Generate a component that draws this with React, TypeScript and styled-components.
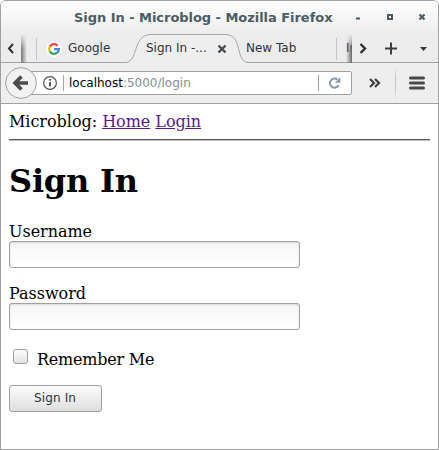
import React from "react";
import styled, { createGlobalStyle } from "styled-components";

const GlobalStyle = createGlobalStyle`
  * { box-sizing: border-box; }
  html, body { margin: 0; background: #fff; }
  body { overflow: hidden; }
`;

const Window = styled.div`
  display: flex;
  flex-direction: column;
  width: 439px;
  height: 450px;
  border: 1px solid #a0a0a0;
  border-radius: 6px 6px 0 0;
  background: #fff;
  overflow: hidden;
  font-family: "DejaVu Sans", sans-serif;
  font-size: 12px;
  color: #2f3438;
`;

const Chrome = styled.header`
  flex: none;
  height: 103px;
  border-bottom: 1px solid #a0a0a0;
  background: linear-gradient(#ffffff 0, #ececec 34px, #ececec 62px, #eeeeee 62px);
`;

const TitleBar = styled.div`
  display: flex;
  align-items: center;
  height: 33px;
  padding-left: 73px;
`;

const Title = styled.h1`
  flex: none;
  width: 281px;
  margin: 0;
  font-size: 13px;
  line-height: 31px;
  font-weight: bold;
  letter-spacing: -0.04px;
  color: #4a5c66;
  white-space: nowrap;
`;

const WindowControls = styled.svg`
  flex: none;
  width: 76px;
  height: 33px;
`;

const TabStrip = styled.div`
  display: flex;
  height: 29px;
  box-shadow: inset 0 -1px #a0a3a6;
`;

const ScrollLeft = styled.svg`
  flex: none;
  width: 35px;
  height: 29px;
`;

const ScrollRight = styled.svg`
  position: relative;
  flex: none;
  width: 93px;
  height: 29px;
  margin-left: -14px;
`;

const Tab = styled.div<{ $width: number; $pad: number; $divider?: "left" | "right" }>`
  position: relative;
  flex: none;
  display: flex;
  align-items: center;
  width: ${(p) => p.$width}px;
  height: 29px;
  padding-left: ${(p) => p.$pad}px;
  line-height: 29px;
  white-space: nowrap;
  ${(p) =>
    p.$divider &&
    `background: linear-gradient(#c4c4c4, #c4c4c4) ${p.$divider} 4px / 1px 22px no-repeat;`}
`;

const TabShape = styled.svg`
  position: absolute;
  left: -14px;
  top: 0;
  width: 128px;
  height: 29px;
`;

const TabLabel = styled.span<{ $width?: number }>`
  position: relative;
  height: 29px;
  ${(p) => p.$width && `width: ${p.$width}px;`}
`;

const TabClose = styled.svg`
  position: relative;
  width: 10px;
  height: 10px;
`;

const Favicon = styled.svg`
  width: 16px;
  height: 16px;
  margin-right: 6px;
`;

const NavBar = styled.nav`
  display: flex;
  align-items: center;
  height: 40px;
  padding-left: 4px;
`;

const BackButton = styled.svg`
  position: relative;
  z-index: 1;
  flex: none;
  width: 32px;
  height: 32px;
`;

const UrlBar = styled.div`
  display: flex;
  align-items: center;
  width: 323px;
  height: 24px;
  margin-left: -8px;
  padding-left: 12px;
  border: 1px solid #a0a0a0;
  border-radius: 2px;
  background: #fff;
`;

const InfoIcon = styled.svg`
  flex: none;
  width: 16px;
  height: 16px;
  margin-right: 5px;
`;

const Separator = styled.i<{ $height: number; $color: string }>`
  flex: none;
  width: 1px;
  height: ${(p) => p.$height}px;
  background: ${(p) => p.$color};
`;

const Address = styled.span`
  flex: none;
  width: 249px;
  margin-left: 5px;
  line-height: 20px;
  color: #858c93;
  b { font-weight: normal; color: #000; }
`;

const ReloadIcon = styled.svg`
  width: 14px;
  height: 14px;
  margin-left: 9px;
`;

const MoreIcon = styled.svg`
  width: 12px;
  height: 12px;
  margin: 0 14px 0 17px;
`;

const MenuIcon = styled.svg`
  width: 18px;
  height: 16px;
  margin-left: 12px;
`;

const Page = styled.main`
  flex: 1;
  padding: 8px 8px 0;
  font-family: "DejaVu Serif", serif;
  font-size: 16px;
  line-height: 19px;
  letter-spacing: -0.03px;
  color: #000;
`;

const SiteNav = styled.div`
  height: 27px;
`;

const SiteLink = styled.a`
  color: #551a8b;
  text-decoration: underline;
`;

const Rule = styled.hr`
  width: 421px;
  height: 2px;
  margin: 0;
  border: 0;
  background: linear-gradient(#5a5a5a 50%, #c0c0c0 50%);
`;

const Heading = styled.h2`
  margin: 21px 0 22px;
  font-size: 32px;
  line-height: 38px;
  font-weight: bold;
  letter-spacing: -0.2px;
`;

const Field = styled.div`
  display: flex;
  flex-direction: column;
  height: 46px;
  margin-bottom: 16px;
`;

const TextInput = styled.input`
  width: 291px;
  height: 27px;
  margin: 0;
  border: 1px solid #a0a0a0;
  border-radius: 3px;
  outline: none;
  background: linear-gradient(#f6f6f6, #ffffff);
  box-shadow: inset 0 1px 2px #d8d8d8;
`;

const Remember = styled.label`
  display: flex;
  align-items: center;
  height: 19px;
  margin-top: 20px;
  letter-spacing: -0.22px;
`;

const Checkbox = styled.input`
  appearance: none;
  width: 15px;
  height: 15px;
  margin: 0 9px 6px 4px;
  border: 1px solid #a0a0a0;
  border-radius: 3px;
  background: linear-gradient(#fdfdfd, #e2e2e2);
`;

const SubmitButton = styled.button`
  display: block;
  width: 93px;
  height: 27px;
  margin: 16px 0 0;
  padding: 0 1px 2px 0;
  border: 1px solid #a0a0a0;
  border-radius: 3px;
  background: linear-gradient(#fcfcfc, #dedede);
  font: 12px "DejaVu Sans", sans-serif;
  letter-spacing: 0.15px;
  color: #2f3438;
`;

export default function App() {
  return (
    <>
      <GlobalStyle />
      <Window>
        <Chrome>
          <TitleBar>
            <Title>Sign In - Microblog - Mozilla Firefox</Title>
            <WindowControls viewBox="355 1 76 33" fill="none" stroke="#4a5c66">
              <path d="M356 18.5h4" strokeWidth="2" />
              <rect x="388" y="15" width="4" height="4" strokeWidth="2" />
              <path d="M419.5 14.5l5 5m0-5l-5 5" strokeWidth="2.2" />
            </WindowControls>
          </TitleBar>
          <TabStrip>
            <ScrollLeft viewBox="1 34 35 29">
              <defs>
                <linearGradient id="shadeL">
                  <stop offset="0" stopColor="#777" />
                  <stop offset="1" stopColor="#777" stopOpacity="0" />
                </linearGradient>
                <linearGradient id="fadeL" x1="0" y1="0" x2="0" y2="1">
                  <stop offset="0" stopColor="#ececec" />
                  <stop offset="1" stopColor="#ececec" stopOpacity="0" />
                </linearGradient>
              </defs>
              <path d="M13 44l-4 4.5 4 4.5" fill="none" stroke="#2c3135" strokeWidth="2" />
              <rect x="21" y="34" width="6" height="29" fill="url(#shadeL)" />
              <rect x="21" y="34" width="6" height="15" fill="url(#fadeL)" />
            </ScrollLeft>
            <Tab $width={103} $pad={10} $divider="left">
              <Favicon viewBox="0 0 16 16">
                <circle cx="8" cy="8" r="8" fill="#fff" />
                <g fill="none" strokeWidth="2.3">
                  <path d="M3.8 5.6A4.9 4.9 0 0 1 11.6 4.7" stroke="#ea4335" />
                  <path d="M3.8 5.6A4.9 4.9 0 0 0 3.8 10.4" stroke="#fbbc05" />
                  <path d="M3.8 10.4A4.9 4.9 0 0 0 11.2 11.7" stroke="#34a853" />
                  <path d="M11.2 11.7A4.9 4.9 0 0 0 12.8 8.2H8" stroke="#4285f4" />
                </g>
              </Favicon>
              <TabLabel>Google</TabLabel>
            </Tab>
            <Tab $width={99} $pad={7}>
              <TabShape viewBox="125 34 128 29">
                <path
                  d="M125 62.5C139 62.5 132 34.5 151 34.5H225C244 34.5 234 62.5 249 62.5V63H125Z"
                  fill="#eeeeee"
                />
                <path
                  d="M125 62.5C139 62.5 132 34.5 151 34.5H225C244 34.5 234 62.5 249 62.5H253"
                  fill="none"
                  stroke="#a0a6aa"
                />
              </TabShape>
              <TabLabel $width={71}>Sign In -...</TabLabel>
              <TabClose viewBox="0 0 10 10">
                <path d="M1.5 1.5l7 7m0-7l-7 7" stroke="#454c50" strokeWidth="2.4" />
              </TabClose>
            </Tab>
            <Tab $width={99} $pad={8} $divider="right">
              <TabLabel>New Tab</TabLabel>
            </Tab>
            <Tab $width={22} $pad={9}>
              <TabLabel>In</TabLabel>
            </Tab>
            <ScrollRight viewBox="345 34 93 29">
              <defs>
                <linearGradient id="shadeR">
                  <stop offset="0" stopColor="#777" stopOpacity="0" />
                  <stop offset="1" stopColor="#666" />
                </linearGradient>
                <linearGradient id="fadeR" x1="0" y1="0" x2="0" y2="1">
                  <stop offset="0" stopColor="#000" />
                  <stop offset="0.55" stopColor="#fff" />
                </linearGradient>
                <mask id="maskR">
                  <rect x="346" y="34" width="6" height="29" fill="url(#fadeR)" />
                </mask>
              </defs>
              <rect x="346" y="34" width="6" height="29" fill="url(#shadeR)" mask="url(#maskR)" />
              <path d="M352 34h86v28h-86z" fill="#ececec" />
              <path d="M360.5 44l4.5 4.5-4.5 4.5" fill="none" stroke="#2c3135" strokeWidth="2.4" />
              <path d="M385 48.5h12M391 42.5v12" stroke="#3c3c3c" strokeWidth="2" />
              <path d="M420 47h7l-3.5 4z" fill="#2c3840" />
            </ScrollRight>
          </TabStrip>
          <NavBar>
            <BackButton viewBox="0 0 32 32">
              <circle cx="16" cy="16" r="15.4" fill="#f2f2f2" stroke="#a0a0a0" />
              <path d="M23 16H11M16.5 9.5L10 16l6.5 6.5" fill="none" stroke="#4c4c4c" strokeWidth="3.6" />
            </BackButton>
            <UrlBar>
              <InfoIcon viewBox="0 0 16 16">
                <circle cx="8" cy="8" r="6.4" fill="none" stroke="#555" strokeWidth="1.2" />
                <path d="M8 7v4.5M8 4v1.7" stroke="#444" strokeWidth="1.7" />
              </InfoIcon>
              <Separator $height={16} $color="#a8a8a8" />
              <Address>
                <b>localhost</b>:5000/login
              </Address>
              <Separator $height={16} $color="#95a1ac" />
              <ReloadIcon viewBox="0 0 14 14">
                <path d="M10.6 9.3A4.6 4.6 0 1 1 9.6 3.6" fill="none" stroke="#8a99a8" strokeWidth="2" />
                <path d="M12.3 1.3v5.4H6.9z" fill="#8a99a8" />
              </ReloadIcon>
            </UrlBar>
            <MoreIcon viewBox="0 0 12 12">
              <path d="M1 2l4 4-4 4M6 2l4 4-4 4" fill="none" stroke="#3f3f42" strokeWidth="2.2" />
            </MoreIcon>
            <Separator $height={34} $color="linear-gradient(#eee, #c6c6c6 30%, #c6c6c6 70%, #eee)" />
            <MenuIcon viewBox="0 0 18 16">
              <path d="M2.5 3h13M2.5 8h13M2.5 13h13" stroke="#48484b" strokeWidth="3" strokeLinecap="round" />
            </MenuIcon>
          </NavBar>
        </Chrome>
        <Page>
          <SiteNav>
            Microblog: <SiteLink>Home</SiteLink> <SiteLink>Login</SiteLink>
          </SiteNav>
          <Rule />
          <Heading>Sign In</Heading>
          <Field>
            <label htmlFor="username">Username</label>
            <TextInput id="username" />
          </Field>
          <Field>
            <label htmlFor="password">Password</label>
            <TextInput id="password" type="password" />
          </Field>
          <Remember>
            <Checkbox type="checkbox" />
            Remember Me
          </Remember>
          <SubmitButton>Sign In</SubmitButton>
        </Page>
      </Window>
    </>
  );
}
